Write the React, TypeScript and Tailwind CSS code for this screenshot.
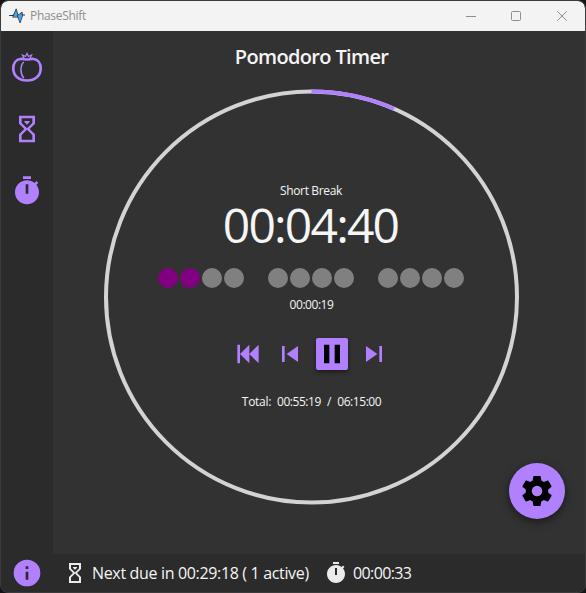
import React from "react";

type IconProps = { d: string; className?: string };

function Icon({ d, className = "size-8" }: IconProps) {
  return (
    <svg viewBox="0 0 24 24" fill="currentColor" className={`shrink-0 ${className}`}>
      <path d={d} />
    </svg>
  );
}

const SAND =
  "M6,2H18V8L14,12L18,16V22H6V16L10,12L6,8V2M16,16.5L12,12.5L8,16.5V20H16V16.5M12,11.5L16,7.5V4H8V7.5L12,11.5M10,6H14V6.75L12,8.75L10,6.75V6Z";
const TIMER =
  "M19.03 7.39L20.45 5.97C20 5.46 19.55 5 19.04 4.56L17.62 6C16.07 4.74 14.12 4 12 4C7.03 4 3 8.03 3 13S7.03 22 12 22C17 22 21 17.97 21 13C21 10.88 20.26 8.93 19.03 7.39M13 14H11V7H13V14M15 1H9V3H15V1Z";
const COG =
  "M12,15.5A3.5,3.5 0 0,1 8.5,12A3.5,3.5 0 0,1 12,8.5A3.5,3.5 0 0,1 15.5,12A3.5,3.5 0 0,1 12,15.5M19.43,12.97C19.47,12.65 19.5,12.33 19.5,12C19.5,11.67 19.47,11.34 19.43,11L21.54,9.37C21.73,9.22 21.78,8.95 21.66,8.73L19.66,5.27C19.54,5.05 19.27,4.96 19.05,5.05L16.56,6.05C16.04,5.66 15.5,5.32 14.87,5.07L14.5,2.42C14.46,2.18 14.25,2 14,2H10C9.75,2 9.54,2.18 9.5,2.42L9.13,5.07C8.5,5.32 7.96,5.66 7.44,6.05L4.95,5.05C4.73,4.96 4.46,5.05 4.34,5.27L2.34,8.73C2.21,8.95 2.27,9.22 2.46,9.37L4.57,11C4.53,11.34 4.5,11.67 4.5,12C4.5,12.33 4.53,12.65 4.57,12.97L2.46,14.63C2.27,14.78 2.21,15.05 2.34,15.27L4.34,18.73C4.46,18.95 4.73,19.03 4.95,18.95L7.44,17.94C7.96,18.34 8.5,18.68 9.13,18.93L9.5,21.58C9.54,21.82 9.75,22 10,22H14C14.25,22 14.46,21.82 14.5,21.58L14.87,18.93C15.5,18.67 16.04,18.34 16.56,17.94L19.05,18.95C19.27,19.03 19.54,18.95 19.66,18.73L21.66,15.27C21.78,15.05 21.73,14.78 21.54,14.63L19.43,12.97Z";
const INFO =
  "M13,9H11V7H13M13,17H11V11H13M12,2A10,10 0 0,0 2,12A10,10 0 0,0 12,22A10,10 0 0,0 22,12A10,10 0 0,0 12,2Z";
const BACKWARD = "M20,5V19L13,12M6,5V19H4V5M13,5V19L6,12";
const PREVIOUS = "M6,18V6H8V18H6M9.5,12L18,6V18L9.5,12Z";
const PAUSE = "M14,19H18V5H14M6,19H10V5H6V19Z";
const NEXT = "M16,18H18V6H16M6,18L14.5,12L6,6V18Z";

function TitleBar() {
  return (
    <header className="flex h-[30px] shrink-0 items-center rounded-t-[7px] bg-[#f3f3f3] pl-2 text-[#8e8e8e]">
      <svg viewBox="0 0 16 16" className="size-4" stroke="#26323c" strokeLinejoin="round" strokeLinecap="round">
        <path d="M0.600 7.500H4L6 6M12 5.500L13.500 7L15.500 7" fill="none" strokeWidth="1.200" />
        <path d="M3.900 8.800L7.200 0.800L9.500 8.800Z" fill="#45a5ee" strokeWidth="0.800" />
        <path d="M8.600 7.400L13.200 4.200L13.400 8.300L11.200 14.600Z" fill="#45a5ee" strokeWidth="0.800" />
      </svg>
      <span className="ml-[5px] text-xs tracking-[-0.3px]">PhaseShift</span>
      <div className="ml-auto flex">
        <svg viewBox="0 0 10 10" className="mr-[35px] size-[10px]" stroke="currentColor" fill="none">
          <path d="M0 5.5H10" />
        </svg>
        <svg viewBox="0 0 10 10" className="mr-[36px] size-[10px]" stroke="currentColor" fill="none">
          <rect x="0.5" y="0.5" width="9" height="9" rx="1" />
        </svg>
        <svg viewBox="0 0 10 10" className="mr-[18px] size-[10px]" stroke="currentColor" fill="none">
          <path d="M0.3 0.3L9.7 9.7M9.7 0.3L0.3 9.7" />
        </svg>
      </div>
    </header>
  );
}

function Sidebar() {
  return (
    <nav className="flex w-[52px] shrink-0 flex-col items-center bg-[#2b2b2b] pt-5 text-[#b080ff]">
      <svg viewBox="0 0 32 32" className="size-8" fill="none" stroke="currentColor">
        <path
          d="M9.500 8C5 8.500 2.300 12.500 2.300 17.500C2.300 25 8 29.500 16 29.500S29.700 25 29.700 17.500C29.700 12.500 27 8.500 22.500 8C20 7.700 18 8.500 16 8.500S12 7.700 9.500 8Z"
          strokeWidth="2.700"
        />
        <path d="M12.800 11C9 14.500 9 22.500 12.800 27" strokeWidth="1.500" />
        <path d="M13 7.500L11.500 4L14.500 5.500L16 2.500L17.500 5.500L20.500 4L19 7.500" strokeWidth="1.300" />
      </svg>
      <Icon d={SAND} className="mt-[30px] size-8" />
      <Icon d={TIMER} className="mt-[30px] size-8" />
    </nav>
  );
}

function Dots() {
  return (
    <div className="flex gap-6">
      {[0, 1, 2].map((group) => (
        <div key={group} className="flex gap-0.5">
          {[0, 1, 2, 3].map((dot) => (
            <span
              key={dot}
              className={`size-5 rounded-full ${group === 0 && dot < 2 ? "bg-[#800080]" : "bg-[#808080]"}`}
            />
          ))}
        </div>
      ))}
    </div>
  );
}

function Dial() {
  return (
    <div className="grid size-[416px] shrink-0">
      <svg viewBox="0 0 416 416" className="col-start-1 row-start-1 size-full" fill="none" strokeWidth="4">
        <circle cx="208.500" cy="208" r="205.500" stroke="#d3d3d3" />
        <path d="M208.500 2.500A205.500 205.500 0 0 1 291 19.800" stroke="#b080ff" />
      </svg>
      <div className="col-start-1 row-start-1 flex flex-col items-center pt-[94px]">
        <div className="h-4 text-xs leading-4 tracking-[-0.350px]">Short Break</div>
        <div className="h-[52px] pr-px text-[48px] leading-[51px] tracking-[-1.800px]">00:04:40</div>
        <div className="mt-[17px]">
          <Dots />
        </div>
        <div className="mt-[9px] h-4 pl-px text-xs leading-4 tracking-[-0.450px]">00:00:19</div>
        <div className="mt-[25px] flex gap-[10px] text-[#b080ff]">
          <Icon d={BACKWARD} />
          <Icon d={PREVIOUS} />
          <span className="rounded-[2px] bg-[#b080ff] text-black shadow-[0_2px_4px_rgba(0,0,0,0.5)]">
            <Icon d={PAUSE} />
          </span>
          <Icon d={NEXT} />
        </div>
        <div className="mt-6 flex h-4 pl-px text-xs leading-4">
          <span className="tracking-[-0.300px]">Total:</span>
          <span className="ml-[6px] tracking-[-0.450px]">00:55:19</span>
          <span className="ml-[6px]">/</span>
          <span className="ml-[6px] tracking-[-0.450px]">06:15:00</span>
        </div>
      </div>
    </div>
  );
}

export default function App() {
  return (
    <div className="h-[593px] w-[586px] bg-[#141414] font-['Open_Sans','Noto_Sans',sans-serif]">
      <div className="flex h-full flex-col overflow-hidden rounded-[8px] border border-[#3c3a3b] bg-[#2b2b2b] text-[#f5f5f5]">
        <TitleBar />
        <div className="flex h-[523px] shrink-0">
          <Sidebar />
          <main className="relative flex flex-1 flex-col items-center bg-[#323232] pr-4">
            <h1 className="mt-3 h-7 pl-px text-xl leading-7 font-semibold tracking-[-0.650px]">Pomodoro Timer</h1>
            <div className="mt-[18px]">
              <Dial />
            </div>
            <button className="absolute right-5 bottom-[35px] flex size-14 items-center justify-center rounded-full bg-[#b080ff] text-black shadow-[0_3px_8px_rgba(0,0,0,0.5)]">
              <Icon d={COG} className="size-9" />
            </button>
          </main>
        </div>
        <footer className="flex flex-1 items-center">
          <div className="flex w-[52px] justify-center text-[#b080ff]">
            <Icon d={INFO} />
          </div>
          <Icon d={SAND} className="ml-[10px] size-6 text-[#ebebeb]" />
          <span className="ml-[5px] w-[218px] text-base whitespace-nowrap tracking-[-0.340px]">
            Next due in 00:29:18 ( 1 active)
          </span>
          <Icon d={TIMER} className="ml-[14px] size-6 text-[#ebebeb]" />
          <span className="ml-[5px] text-base tracking-[-0.620px]">00:00:33</span>
        </footer>
      </div>
    </div>
  );
}
